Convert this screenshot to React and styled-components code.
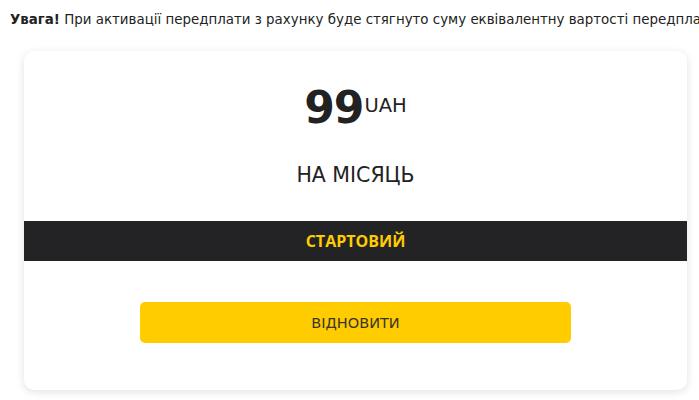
import React from "react";
import styled, { createGlobalStyle } from "styled-components";

const Global = createGlobalStyle`
  html, body { margin: 0; padding: 0; background: #fff; }
  body { font-family: "DejaVu Sans", "Liberation Sans", sans-serif; color: #222; overflow: hidden; }
`;

const Page = styled.div`
  width: 699px;
  height: 400px;
  overflow: hidden;
  display: flex;
  flex-direction: column;
`;

const Notice = styled.p`
  margin: 0;
  padding: 11px 0 0 10px;
  height: 40px;
  box-sizing: border-box;
  font-size: 13.4px;
  line-height: 18px;
  white-space: nowrap;
  overflow: hidden;
  color: #222;
  b { font-weight: 700; }
`;

const Card = styled.div`
  margin: 11px 12px 0 24px;
  height: 339px;
  background: #fff;
  border-radius: 10px;
  box-shadow: 0 2px 8px rgba(0, 0, 0, 0.12);
  display: flex;
  flex-direction: column;
  align-items: stretch;
  overflow: hidden;
`;

const Price = styled.div`
  display: flex;
  justify-content: center;
  align-items: flex-start;
  padding-top: 34px;
  height: 45px;
`;

const Amount = styled.span`
  font-size: 44px;
  line-height: 46px;
  font-weight: 700;
  color: #222;
  letter-spacing: -1px;
`;

const Currency = styled.span`
  font-size: 19.5px;
  line-height: 19px;
  margin-top: 11px;
  margin-left: 1px;
  color: #222;
`;

const Period = styled.div`
  text-align: center;
  font-size: 20.5px;
  line-height: 24px;
  margin-top: 33px;
  color: #222;
`;

const Band = styled.div`
  margin-top: 34px;
  height: 40px;
  background: #232325;
  color: #ffcc00;
  display: flex;
  align-items: center;
  justify-content: center;
  font-family: "Open Sans", sans-serif;
  font-weight: 700;
  font-size: 16px;
`;

const Action = styled.div`
  display: flex;
  justify-content: center;
  padding-top: 41px;
`;

const Button = styled.button`
  width: 431px;
  height: 41px;
  border: none;
  border-radius: 5px;
  background: #ffcc00;
  color: #3a3526;
  font-family: inherit;
  font-size: 14.5px;
  cursor: pointer;
`;

export default function App() {
  return (
    <Page>
      <Global />
      <Notice>
        <b>Увага!</b> При активації передплати з рахунку буде стягнуто суму еквівалентну вартості передплати
      </Notice>
      <Card>
        <Price>
          <Amount>99</Amount>
          <Currency>UAH</Currency>
        </Price>
        <Period>НА МІСЯЦЬ</Period>
        <Band>СТАРТОВИЙ</Band>
        <Action>
          <Button>ВІДНОВИТИ</Button>
        </Action>
      </Card>
    </Page>
  );
}
